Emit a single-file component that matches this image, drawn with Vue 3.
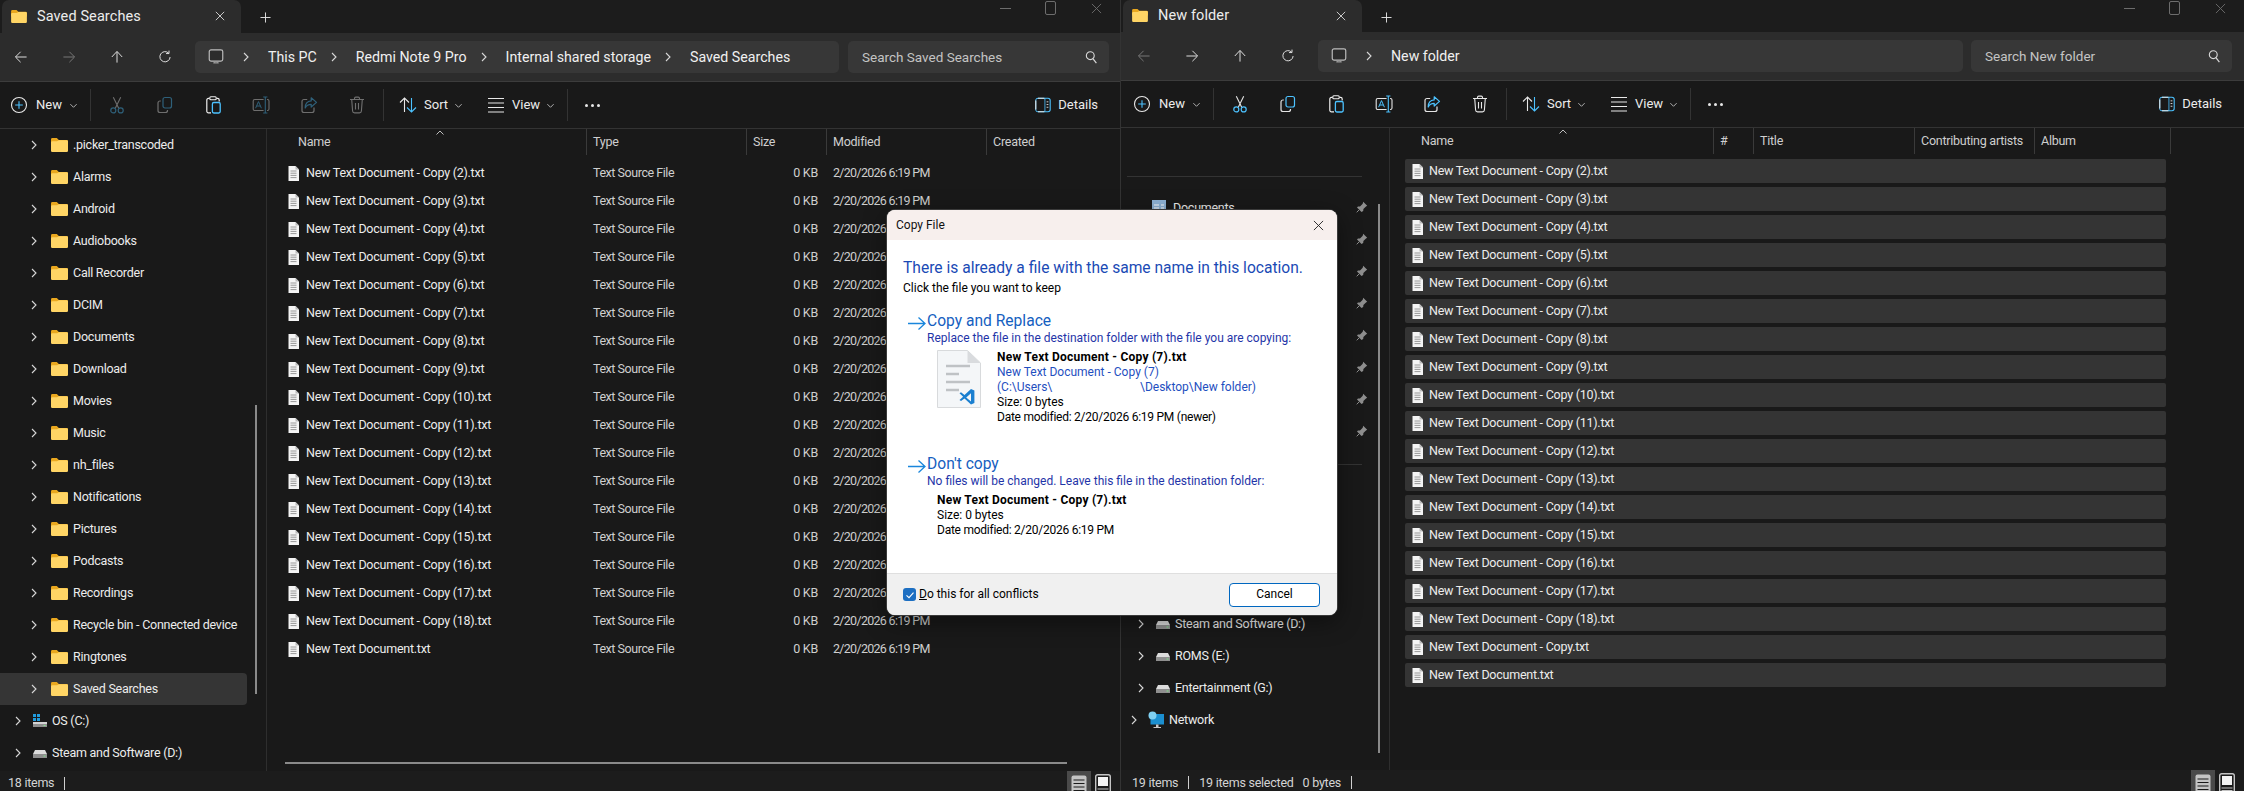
<template>
  <div class="screen">
    <!-- icon sprite -->
    <svg class="sprite" width="0" height="0" aria-hidden="true">
      <symbol id="i-back" viewBox="0 0 20 20"><path d="M17 10H3.5M9.5 3.5 3 10l6.5 6.5" fill="none" stroke="#e4e4e4" stroke-width="1.2"/></symbol>
      <symbol id="i-fwd" viewBox="0 0 20 20"><path d="M3 10h13.5M10.5 3.5 17 10l-6.5 6.5" fill="none" stroke="#e4e4e4" stroke-width="1.2"/></symbol>
      <symbol id="i-up" viewBox="0 0 20 20"><path d="M10 17V3.5M3.5 10 10 3l6.5 7" fill="none" stroke="#e4e4e4" stroke-width="1.2"/></symbol>
      <symbol id="i-refresh" viewBox="0 0 20 20"><path d="M14.6 5.2A6.4 6.4 0 1 0 16.4 10M15 2v3.7h-3.7" fill="none" stroke="#e4e4e4" stroke-width="1.2"/></symbol>
      <symbol id="i-pc" viewBox="0 0 20 20"><rect x="2.5" y="2" width="15" height="12.5" rx="2" fill="#2c2c2c" stroke="#bdbdbd" stroke-width="1.3"/><path d="M7 16.5h6M8.5 14.5v2M11.5 14.5v2" stroke="#9a9a9a" stroke-width="1.2"/></symbol>
      <symbol id="i-chev" viewBox="0 0 10 10"><path d="M3 1l4 4-4 4" fill="none" stroke="#d8d8d8" stroke-width="1.1"/></symbol>
      <symbol id="i-caret" viewBox="0 0 10 10"><path d="M1.5 3.5 5 7l3.5-3.5" fill="none" stroke="#bdbdbd" stroke-width="1"/></symbol>
      <symbol id="i-search" viewBox="0 0 16 16"><circle cx="6.7" cy="6" r="4.2" fill="none" stroke="#d8d8d8" stroke-width="1.2"/><path d="M9.5 9.2 13.2 14" stroke="#d8d8d8" stroke-width="1.3"/></symbol>
      <symbol id="i-x" viewBox="0 0 12 12"><path d="M1 1l10 10M11 1 1 11" fill="none" stroke="currentColor" stroke-width="1"/></symbol>
      <symbol id="i-plus" viewBox="0 0 12 12"><path d="M6 .5v11M.5 6h11" stroke="#e8e8e8" stroke-width="1"/></symbol>
      <symbol id="i-new" viewBox="0 0 20 20"><circle cx="10" cy="10" r="7.5" fill="none" stroke="#e8e8e8" stroke-width="1.1"/><path d="M10 6.2v7.6M6.2 10h7.6" stroke="#4cc2ff" stroke-width="1.1"/></symbol>
      <symbol id="i-cut" viewBox="0 0 20 20"><path d="M6.3 2.2l5.4 11M13.7 2.2l-5.4 11" stroke="#e4e4e4" stroke-width="1.1" fill="none"/><circle cx="6.3" cy="15.4" r="2.5" fill="none" stroke="#4cc2ff" stroke-width="1.2"/><circle cx="13.7" cy="15.4" r="2.5" fill="none" stroke="#4cc2ff" stroke-width="1.2"/></symbol>
      <symbol id="i-copy" viewBox="0 0 20 20"><path d="M5.8 6H5a2 2 0 0 0-2 2v7.5a2 2 0 0 0 2 2h5.5a2 2 0 0 0 2-2V15" fill="none" stroke="#e4e4e4" stroke-width="1.2"/><rect x="8" y="2.5" width="8.5" height="10.5" rx="2" fill="none" stroke="#4cc2ff" stroke-width="1.2"/></symbol>
      <symbol id="i-paste" viewBox="0 0 20 20"><path d="M8 17.8H5.4a1.6 1.6 0 0 1-1.6-1.6V5a1.6 1.6 0 0 1 1.6-1.6h1M13.6 3.4h1a1.6 1.6 0 0 1 1.6 1.6v1.4" fill="none" stroke="#efefef" stroke-width="1.2"/><rect x="6.8" y="1.8" width="6.4" height="3" rx="1" fill="none" stroke="#efefef" stroke-width="1.1"/><rect x="9.4" y="7.5" width="7.8" height="10.5" rx="1.4" fill="none" stroke="#4cc2ff" stroke-width="1.3"/></symbol>
      <symbol id="i-rename" viewBox="0 0 20 20"><path d="M12.6 4.5H3.8a1.6 1.6 0 0 0-1.6 1.6v7.8a1.6 1.6 0 0 0 1.6 1.6h8.8M16 4.5h.4A1.6 1.6 0 0 1 18 6.1v7.8a1.6 1.6 0 0 1-1.6 1.6H16" fill="none" stroke="#e4e4e4" stroke-width="1.1"/><path d="M12.2 2h4.2M14.3 2v16M12.2 18h4.2" fill="none" stroke="#4cc2ff" stroke-width="1.1"/><path d="M4.6 13.2 7.5 6.6l2.9 6.6M5.7 11h3.6" fill="none" stroke="#4cc2ff" stroke-width="1"/></symbol>
      <symbol id="i-share" viewBox="0 0 20 20"><path d="M8.2 4.5H5a2 2 0 0 0-2 2v9a2 2 0 0 0 2 2h8a2 2 0 0 0 2-2v-3" fill="none" stroke="#e4e4e4" stroke-width="1.2"/><path d="M12.2 2.8l5.3 4.6-5.3 4.6V9.4c-3 0-4.8 1.2-6 3.6 0-4.2 2-6.8 6-7.1z" fill="none" stroke="#4cc2ff" stroke-width="1.2" stroke-linejoin="round"/></symbol>
      <symbol id="i-trash" viewBox="0 0 20 20"><path d="M3 4.5h14M7.5 4.5V3.4a1.3 1.3 0 0 1 1.3-1.3h2.4a1.3 1.3 0 0 1 1.3 1.3v1.1M4.7 4.5 5.6 16a2 2 0 0 0 2 1.9h4.8a2 2 0 0 0 2-1.9l.9-11.5M8.5 8v6.5M11.5 8v6.5" fill="none" stroke="#e8e8e8" stroke-width="1.1"/></symbol>
      <symbol id="i-sort" viewBox="0 0 20 20"><path d="M6.5 17V3M2 7.5l4.5-4.5L11 7.5" fill="none" stroke="#e8e8e8" stroke-width="1.1"/><path d="M13.5 3v14M9 12.5l4.5 4.5 4.5-4.5" fill="none" stroke="#4cc2ff" stroke-width="1.1"/></symbol>
      <symbol id="i-view" viewBox="0 0 20 20"><path d="M2 3.5h16M2 8h16M2 12.5h16M2 17h16" stroke="#e8e8e8" stroke-width="1.1"/></symbol>
      <symbol id="i-details" viewBox="0 0 20 20"><rect x="2" y="2.5" width="16" height="15" rx="2.5" fill="none" stroke="#4cc2ff" stroke-width="1.2"/><path d="M12 2.5v15" stroke="#4cc2ff" stroke-width="1.2"/><path d="M14 6.5h2M14 9.5h2M14 12.5h2" stroke="#e8e8e8" stroke-width="1"/><path d="M3 3.5h8.5v13H3z" fill="#191919"/><path d="M4.5 2.5h7M4.5 17.5h7M2 5v10" stroke="#e8e8e8" stroke-width="1.2" fill="none"/></symbol>
      <symbol id="i-folder" viewBox="0 0 17 14"><path d="M1.4 0h4.4l2 2h7.8A1.4 1.4 0 0 1 17 3.4V7H0V1.4A1.4 1.4 0 0 1 1.4 0z" fill="#eaa81f"/><path d="M1.2 3.2H6l1.8-1h7.9A1.3 1.3 0 0 1 17 3.5v9.2a1.3 1.3 0 0 1-1.3 1.3H1.3A1.3 1.3 0 0 1 0 12.7V4.4a1.2 1.2 0 0 1 1.2-1.2z" fill="#ffd565"/></symbol>
      <symbol id="i-doc" viewBox="0 0 11 15"><path d="M.5 0h7L11 3.5V15H.5z" fill="#f4f4f4"/><path d="M7.5 0v3.5H11z" fill="#b9b9b9"/><path d="M2.5 5h6M2.5 7.2h6M2.5 9.4h6M2.5 11.6h6" stroke="#8c8c8c" stroke-width=".9"/></symbol>
      <symbol id="i-os" viewBox="0 0 16 16"><path d="M1 1h3v3H1zM5 1h3v3H5zM1 5h3v3H1zM5 5h3v3H5z" fill="#1f9bde"/><path d="M1 9h14v2H1z" fill="#d4d4d4"/><path d="M1 11h14v3H1z" fill="#8f8f8f"/><path d="M11.5 12h2v1h-2z" fill="#7fe08a"/></symbol>
      <symbol id="i-drive" viewBox="0 0 16 16"><path d="M3 5h10l2 4H1z" fill="#dcdcdc"/><path d="M1 9h14v4H1z" fill="#8f8f8f"/><path d="M11.5 10.5h2v1h-2z" fill="#7fe08a"/></symbol>
      <symbol id="i-net" viewBox="0 0 18 18"><path d="M3.5 3H17v10.5H3.5z" fill="#1b8fd0"/><circle cx="5.5" cy="4.5" r="4" fill="#7fd0f2"/><path d="M9 13.5h2.5v2.5H9z" fill="#c8c8c8"/><path d="M6.5 16h7.5v1H6.5z" fill="#c8c8c8"/></symbol>
      <symbol id="i-pin" viewBox="0 0 12 12"><path d="M7.2.8l4 4-1.2.6-2.6 2.7-.2 2L5.5 11 1 6.5l1-.9 2-.2 2.7-2.6z" fill="#8e8e8e"/><path d="M3 9l-2.3 2.3" stroke="#8e8e8e" stroke-width="1"/></symbol>
      <symbol id="i-arrow" viewBox="0 0 18 14"><path d="M0 7.5h16.5M10.5 1.5l6.5 6-6.5 6" fill="none" stroke="#1a86dc" stroke-width="1.3"/></symbol>
      <symbol id="i-page" viewBox="0 0 44 58"><path d="M.5.5h30L43.5 13v44.5H.5z" fill="#f4f6f8" stroke="#d8dadc"/><path d="M30.5.5v12.5h13z" fill="#d9dbde"/><path d="M9 16h24M9 24h13M9 32h24M9 40h13" stroke="#bfc2c5" stroke-width="2.6"/><path d="M34 44l-6.5 6-3.5-2.7-1.5 1 3.6 3.4-3.6 3.4 1.5 1 3.5-2.7 6.5 6 3.4-1.4V45.4zm0 4.2v8.3l-4.8-4.1z" fill="#1a7fd0" transform="translate(0 -5)"/></symbol>
      <symbol id="i-list" viewBox="0 0 16 20"><rect x=".5" y=".5" width="15" height="19" rx="2" fill="#c4c4c4"/><path d="M2.5 5h11M2.5 8.5h11M2.5 12h11M2.5 15.5h11" stroke="#1a1a1a" stroke-width="1"/></symbol>
      <symbol id="i-tiles" viewBox="0 0 16 20"><rect x=".7" y=".7" width="14.6" height="18.6" rx="2" fill="#1a1a1a" stroke="#c4c4c4" stroke-width="1.4"/><rect x="3" y="3" width="10" height="9" fill="#f4f4f4"/><path d="M2.5 15h11M2.5 17.5h11" stroke="#c4c4c4" stroke-width="1"/></symbol>
    </svg>

    <section v-for="win in windows" :key="win.id" class="win" :class="win.id">
      <div class="tabbar bar">
        <div class="tab">
          <svg class="ic-folder-tab"><use href="#i-folder" /></svg>
          <span class="tab-title">{{ win.title }}</span>
          <svg class="tab-x"><use href="#i-x" /></svg>
        </div>
        <svg class="tab-plus"><use href="#i-plus" /></svg>
        <div class="controls">
          <span class="min"></span>
          <span class="max"></span>
          <svg class="cl"><use href="#i-x" /></svg>
        </div>
      </div>

      <div class="navbar bar">
        <div class="navbtns">
          <svg class="nav-ic" :class="{ dim: win.id === 'right' }"><use href="#i-back" /></svg>
          <svg class="nav-ic" :class="{ dim: win.id === 'left' }"><use href="#i-fwd" /></svg>
          <svg class="nav-ic"><use href="#i-up" /></svg>
          <svg class="nav-ic"><use href="#i-refresh" /></svg>
        </div>
        <div class="address">
          <svg class="pc"><use href="#i-pc" /></svg>
          <template v-for="c in win.crumbs" :key="c">
            <svg class="crumb-chev"><use href="#i-chev" /></svg>
            <span class="crumb">{{ c }}</span>
          </template>
        </div>
        <div class="search">
          <span>{{ win.search }}</span>
          <svg class="search-ic"><use href="#i-search" /></svg>
        </div>
      </div>

      <div class="toolbar bar">
        <div class="drop d-new">
          <svg class="tool-ic"><use href="#i-new" /></svg>
          <span class="drop-label">New</span>
          <svg class="caret"><use href="#i-caret" /></svg>
        </div>
        <i class="tsep"></i>
        <div class="actions" :class="{ disabled: win.id === 'left' }">
          <svg class="tool-ic" v-for="a in actions" :key="a" :class="{ on: a === 'paste' }"><use :href="'#i-' + a" /></svg>
        </div>
        <i class="tsep"></i>
        <div class="drop d-sort">
          <svg class="tool-ic"><use href="#i-sort" /></svg>
          <span class="drop-label">Sort</span>
          <svg class="caret"><use href="#i-caret" /></svg>
        </div>
        <div class="drop d-view">
          <svg class="tool-ic"><use href="#i-view" /></svg>
          <span class="drop-label">View</span>
          <svg class="caret"><use href="#i-caret" /></svg>
        </div>
        <i class="tsep"></i>
        <div class="dots"><b></b><b></b><b></b></div>
        <div class="details">
          <svg class="tool-ic"><use href="#i-details" /></svg>
          <span>Details</span>
        </div>
      </div>

      <div class="body">
        <aside class="side">
          <template v-if="win.id === 'left'">
            <div v-for="f in folders" :key="f" class="node folder" :class="{ selected: f === 'Saved Searches' }">
              <svg class="node-chev"><use href="#i-chev" /></svg>
              <svg class="ic-folder"><use href="#i-folder" /></svg>
              <span>{{ f }}</span>
            </div>
            <div class="node drive" v-for="d in leftDrives" :key="d.name">
              <svg class="node-chev"><use href="#i-chev" /></svg>
              <svg class="ic-drive"><use :href="d.icon" /></svg>
              <span>{{ d.name }}</span>
            </div>
            <div class="side-thumb thumb-left"></div>
          </template>
          <template v-else>
            <div class="side-gap"></div>
            <div class="side-line"></div>
            <div class="side-gap2"></div>
            <div class="node pinned" v-for="(p, i) in 8" :key="p">
              <template v-if="i === 0">
                <svg class="ic-docs" viewBox="0 0 14 16"><rect x="0" y="0" width="14" height="16" fill="#8fb3d6"/><path d="M2 5h5M2 8h5M9 5h3M9 8h3" stroke="#fff" stroke-width="1.2"/></svg>
                <span>Documents</span>
              </template>
              <svg class="ic-pin"><use href="#i-pin" /></svg>
            </div>
            <div class="side-gap3"></div>
            <div class="side-line"></div>
            <div class="side-gap4"></div>
            <div class="node drive" v-for="d in rightDrives" :key="d">
              <svg class="node-chev"><use href="#i-chev" /></svg>
              <svg class="ic-drive"><use href="#i-drive" /></svg>
              <span>{{ d }}</span>
            </div>
            <div class="node netw">
              <svg class="node-chev"><use href="#i-chev" /></svg>
              <svg class="ic-net"><use href="#i-net" /></svg>
              <span>Network</span>
            </div>
            <div class="side-thumb thumb-right"></div>
          </template>
        </aside>

        <div class="list">
          <div class="head cols">
            <div v-for="(h, i) in win.columns" :key="h" class="hcell">
              {{ h }}
              <svg v-if="i === 0" class="sort-up"><use href="#i-caret" /></svg>
            </div>
          </div>
          <div class="rows">
            <div v-for="f in win.files" :key="f" class="row" :class="{ sel: win.id === 'right' }">
              <div class="rowfill cols">
                <div class="name">
                  <svg class="ic-doc"><use href="#i-doc" /></svg>
                  <span>{{ f }}</span>
                </div>
                <template v-if="win.id === 'left'">
                  <div class="type">Text Source File</div>
                  <div class="size">0 KB</div>
                  <div class="date">2/20/2026 6:19 PM</div>
                </template>
              </div>
            </div>
          </div>
          <div v-if="win.id === 'left'" class="hscroll"></div>
        </div>
      </div>

      <div class="status bar">
        <span>{{ win.count }}</span>
        <i class="ssep"></i>
        <template v-if="win.selected">
          <span>{{ win.selected }}</span>
          <span class="bytes">0 bytes</span>
          <i class="ssep"></i>
        </template>
        <div class="viewsw">
          <div class="sw on"><svg><use href="#i-list" /></svg></div>
          <svg class="sw2"><use href="#i-tiles" /></svg>
        </div>
      </div>
    </section>

    <!-- Copy File dialog -->
    <div class="dialog">
      <div class="dlg-title">
        <span>Copy File</span>
        <svg class="dlg-x"><use href="#i-x" /></svg>
      </div>
      <div class="dlg-body">
        <div class="dlg-head">There is already a file with the same name in this location.</div>
        <div class="dlg-sub">Click the file you want to keep</div>

        <div class="opt first">
          <svg class="opt-arrow"><use href="#i-arrow" /></svg>
          <span>Copy and Replace</span>
        </div>
        <div class="opt-sub">Replace the file in the destination folder with the file you are copying:</div>
        <div class="opt-file">
          <svg class="page"><use href="#i-page" /></svg>
          <div class="lines">
            <div class="bold">New Text Document - Copy (7).txt</div>
            <div class="link">New Text Document - Copy (7)</div>
            <div class="link"><span class="redact">(C:\Users\</span>\Desktop\New folder)</div>
            <div>Size: 0 bytes</div>
            <div class="when">Date modified: 2/20/2026 6:19 PM (newer)</div>
          </div>
        </div>

        <div class="opt second">
          <svg class="opt-arrow"><use href="#i-arrow" /></svg>
          <span>Don't copy</span>
        </div>
        <div class="opt-sub">No files will be changed. Leave this file in the destination folder:</div>
        <div class="lines keep">
          <div class="bold">New Text Document - Copy (7).txt</div>
          <div>Size: 0 bytes</div>
          <div class="when">Date modified: 2/20/2026 6:19 PM</div>
        </div>
      </div>
      <div class="dlg-foot">
        <label class="check">
          <span class="box"><svg viewBox="0 0 12 12" width="12" height="12"><path d="M2.5 6.3 5 8.6l4.5-5" fill="none" stroke="#fff" stroke-width="1.1"/></svg></span>
          <span><u>D</u>o this for all conflicts</span>
        </label>
        <button class="cancel">Cancel</button>
      </div>
    </div>
  </div>
</template>

<script setup>
const copies = (from, to) => {
  const out = []
  for (let i = from; i <= to; i++) out.push(`New Text Document - Copy (${i}).txt`)
  return out
}

const actions = ['cut', 'copy', 'paste', 'rename', 'share', 'trash']

const folders = [
  '.picker_transcoded', 'Alarms', 'Android', 'Audiobooks', 'Call Recorder', 'DCIM',
  'Documents', 'Download', 'Movies', 'Music', 'nh_files', 'Notifications', 'Pictures',
  'Podcasts', 'Recordings', 'Recycle bin - Connected device', 'Ringtones', 'Saved Searches'
]
const leftDrives = [
  { name: 'OS (C:)', icon: '#i-os' },
  { name: 'Steam and Software (D:)', icon: '#i-drive' }
]
const rightDrives = ['Steam and Software (D:)', 'ROMS (E:)', 'Entertainment (G:)']

const windows = [
  {
    id: 'left',
    title: 'Saved Searches',
    crumbs: ['This PC', 'Redmi Note 9 Pro', 'Internal shared storage', 'Saved Searches'],
    search: 'Search Saved Searches',
    columns: ['Name', 'Type', 'Size', 'Modified', 'Created'],
    files: [...copies(2, 18), 'New Text Document.txt'],
    count: '18 items',
    selected: ''
  },
  {
    id: 'right',
    title: 'New folder',
    crumbs: ['New folder'],
    search: 'Search New folder',
    columns: ['Name', '#', 'Title', 'Contributing artists', 'Album'],
    files: [...copies(2, 18), 'New Text Document - Copy.txt', 'New Text Document.txt'],
    count: '19 items',
    selected: '19 items selected'
  }
]
</script>

<style>
html, body { margin: 0; background: #191919; overflow: hidden; }
</style>

<style scoped>
.screen {
  display: flex;
  position: relative;
  width: 2244px;
  height: 791px;
  overflow: hidden;
  background: #191919;
  color: #ececec;
  font: 12.5px/16px Roboto, "Noto Sans", sans-serif;
  letter-spacing: -.25px;
}
.sprite { position: absolute; }
svg { display: block; flex: none; }

.win { display: flex; flex-direction: column; height: 791px; flex: none; }
.win.left { width: 1120px; border-right: 1px solid #333; }
.win.right { width: 1123px; }
.right .bar { padding-left: 2px; }
.bar { display: flex; box-sizing: border-box; flex: none; }

/* tabs */
.tabbar { height: 33px; background: #1c1c1c; align-items: flex-start; padding-left: 2px; }
.right .tabbar { height: 32px; }
.tab {
  display: flex; align-items: center; width: 239px; height: 33px; padding: 0 0 0 9px; box-sizing: border-box;
  background: #2c2c2c; border-radius: 7px 7px 0 0; position: relative;
}
.right .tab { height: 32px; }
.ic-folder-tab { width: 16px; height: 13px; margin-top: -1px; }
.tab-title { margin-left: 10px; font-size: 14.5px; letter-spacing: .1px; }
.tab-x { width: 10px; height: 10px; margin-left: auto; margin-right: 16px; margin-top: -1px; color: #e8e8e8; }
.tab-plus { width: 11px; height: 11px; margin: 12px 0 0 19px; }
.controls { display: flex; align-items: center; margin-left: auto; height: 16px; color: #6d6d6d; }
.min { width: 11px; height: 1px; background: #6d6d6d; }
.max { width: 9px; height: 12px; border: 1px solid #6d6d6d; border-radius: 2px; margin-left: 34px; }
.cl { width: 11px; height: 11px; margin: 0 18px 0 35px; color: #6d6d6d; }

/* nav row */
.navbar { height: 49px; background: #2c2c2c; border-bottom: 1px solid #3c3c3c; align-items: flex-start; padding-top: 8px; }
.navbtns { display: flex; margin-left: -3px; width: 192px; }
.nav-ic { width: 48px; height: 16px; margin-top: 8px; }
.nav-ic.dim { opacity: .42; }
.address {
  display: flex; align-items: center; box-sizing: border-box; width: 644px; height: 32px; margin-left: 6px; padding-left: 12px;
  background: #373737; border-radius: 5px; color: #f0f0f0; font-size: 14.2px; letter-spacing: 0;
}
.right .address { width: 645px; }
.pc { width: 18px; height: 18px; margin-right: 4px; }
.crumb-chev { width: 10px; height: 10px; margin: 0 17px 0 12px; }
.crumb { white-space: nowrap; }
.search {
  display: flex; align-items: center; box-sizing: border-box; width: 261px; height: 32px; margin-left: 9px; padding: 0 10px 0 14px;
  background: #373737; border-radius: 5px; color: #c4c4c4; font-size: 13.5px; letter-spacing: 0;
}
.right .search { margin-left: 8px; }
.search-ic { width: 15px; height: 15px; margin-left: auto; }

/* command bar */
.toolbar { height: 47px; background: #191919; border-bottom: 1px solid #333; align-items: center; letter-spacing: 0; font-size: 13px; }
.tool-ic { width: 20px; height: 20px; }
.drop { display: flex; align-items: center; box-sizing: border-box; }
.drop-label { margin-left: 7px; }
.caret { width: 9px; height: 9px; margin-left: 7px; }
.d-new { width: 90px; padding-left: 9px; }
.d-sort { width: 88px; padding-left: 14px; }
.d-sort .drop-label, .d-view .drop-label { margin-left: 6px; }
.d-sort .caret { margin-left: 6px; }
.d-view { width: 95px; padding-left: 14px; }
.d-view .caret { margin-left: 6px; }
.tsep { display: block; width: 1px; height: 32px; background: #333; flex: none; }
.actions { display: flex; margin-left: 2px; width: 290px; }
.actions .tool-ic { width: 20px; margin: 0 14px; }
.actions.disabled .tool-ic { opacity: .42; }
.actions.disabled .tool-ic.on { opacity: 1; }
.dots { display: flex; gap: 3px; margin-left: 17px; }
.dots b { width: 3px; height: 3px; border-radius: 50%; background: #e8e8e8; }
.details { display: flex; align-items: center; gap: 6px; margin-left: auto; margin-right: 22px; }
.details .tool-ic { width: 18px; height: 18px; }

/* main area */
.body { display: flex; flex: 1; min-height: 0; }
.right .body { padding-left: 2px; }
.side { position: relative; width: 266px; flex: none; border-right: 1px solid #2e2e2e; overflow: hidden; box-sizing: content-box; }
.node { display: flex; align-items: center; height: 32px; white-space: nowrap; }
.node-chev { width: 10px; height: 10px; margin-left: 29px; }
.ic-folder { width: 17px; height: 14px; margin-left: 12px; }
.folder span { margin-left: 5px; }
.selected { width: 247px; background: #353535; border-radius: 0 4px 4px 0; }
.drive .node-chev { margin-left: 13px; }
.ic-drive { width: 16px; height: 16px; margin-left: 9px; }
.drive span { margin-left: 4px; }
.right .drive .node-chev { margin-left: 13px; }
.right .drive .ic-drive { margin-left: 9px; }
.netw .node-chev { margin-left: 6px; }
.ic-net { width: 18px; height: 18px; margin-left: 8px; }
.netw span { margin-left: 4px; }
.side-thumb { position: absolute; width: 2px; background: #8a8a8a; }
.thumb-left { left: 255px; top: 276px; height: 289px; }
.thumb-right { left: 255px; top: 76px; height: 549px; }
.side-gap { height: 48px; }
.side-line { height: 1px; background: #333; width: 235px; margin-left: 4px; }
.side-gap2 { height: 15px; }
.pinned { position: relative; }
.ic-docs { width: 14px; height: 16px; margin-left: 29px; }
.pinned span { margin-left: 7px; }
.ic-pin { position: absolute; left: 233px; top: 9px; width: 12px; height: 12px; }
.side-gap3 { height: 16px; }
.side-gap4 { height: 143px; }

.list { position: relative; flex: 1; min-width: 0; }
.left .cols { display: grid; grid-template-columns: 320px 160px 80px 160px 1fr; }
.right .cols { display: grid; grid-template-columns: 324px 40px 161px 120px 136px; }
.head { height: 26px; }
.hcell { position: relative; display: flex; align-items: center; box-sizing: border-box; padding-left: 6px; border-right: 1px solid #3a3a3a; color: #cfcfcf; white-space: nowrap; }
.hcell:first-child { padding-left: 31px; }
.hcell:last-child { border-right: none; }
.right .hcell:last-child { border-right: 1px solid #3a3a3a; }
.sort-up { position: absolute; left: 168px; top: -1px; width: 10px; height: 10px; transform: rotate(180deg); }
.rows { padding-top: 4px; }
.row { height: 28px; box-sizing: border-box; }
.rowfill { height: 28px; align-items: center; }
.name { display: flex; align-items: center; padding-left: 21px; white-space: nowrap; }
.ic-doc { width: 11px; height: 15px; margin-right: 7px; }
.type { padding-left: 6px; color: #cfcfcf; white-space: nowrap; letter-spacing: -.45px; }
.size { text-align: right; padding-right: 9px; color: #cfcfcf; }
.date { padding-left: 6px; color: #cfcfcf; white-space: nowrap; letter-spacing: -.7px; }
.row.sel { padding: 1px 0 3px 15px; }
.row.sel .rowfill { display: block; width: 761px; height: 24px; background: #343434; border-radius: 2px; }
.row.sel .name { height: 24px; padding-left: 7px; }
.row.sel .ic-doc { margin-right: 6px; }
.hscroll { position: absolute; left: 18px; width: 782px; height: 2px; bottom: 7px; background: #8a8a8a; }

/* status bar */
.status { position: relative; height: 20px; background: #1c1c1c; align-items: center; padding-left: 8px; padding-top: 4px; color: #d4d4d4; }
.right .status { height: 21px; padding-left: 11px; }
.ssep { display: block; width: 1px; height: 13px; background: #cfcfcf; margin: 0 10px; flex: none; }
.bytes { margin-left: 9px; }
.viewsw { display: flex; margin-left: auto; margin-right: 9px; align-self: flex-start; margin-top: -4px; }
.sw { width: 24px; height: 21px; background: #4a4a4a; display: flex; justify-content: center; padding-top: 4px; box-sizing: border-box; overflow: hidden; flex: none; }
.sw svg { width: 16px; height: 20px; }
.sw2 { width: 16px; height: 20px; margin: 3px 0 0 4px; }

/* dialog */
.dialog {
  position: absolute; left: 887px; top: 210px; display: flex; flex-direction: column; width: 450px; height: 405px;
  background: #fff; border-radius: 8px; overflow: hidden; color: #000; font-size: 12px; line-height: 15px; letter-spacing: 0;
  box-shadow: 0 0 0 1px #3a3a3a, 0 6px 24px rgba(0, 0, 0, .45);
}
.dlg-title { display: flex; align-items: center; flex: none; height: 30px; padding: 0 9px; background: #f7efed; font-size: 12px; color: #111; }
.dlg-x { width: 11px; height: 11px; margin-left: auto; margin-right: 4px; color: #222; }
.dlg-body { flex: 1; padding: 17px 0 0 16px; }
.dlg-head { font-size: 15.6px; line-height: 22px; color: #1a4ab5; }
.dlg-sub { line-height: 16px; margin-top: 1px; }
.opt { display: flex; align-items: center; font-size: 15.6px; line-height: 22px; color: #1560c0; position: relative; }
.opt.first { margin-top: 14px; }
.opt.second { margin-top: 28px; }
.opt-arrow { width: 18px; height: 14px; margin: 4px 1px 0 5px; }
.opt-sub { margin: -2px 0 0 24px; line-height: 16px; color: #1f35a8; }
.opt-file { display: flex; margin: 4px 0 0 34px; }
.page { width: 44px; height: 58px; }
.lines { margin-left: 16px; }
.bold { font-weight: 700; letter-spacing: .23px; }
.when { letter-spacing: -.25px; }
.link { color: #1f4fc0; }
.redact { display: inline-block; width: 143px; }
.lines.keep { margin: 4px 0 0 34px; }
.dlg-foot { display: flex; align-items: center; justify-content: space-between; flex: none; height: 42px; box-sizing: border-box; padding: 0 17px 0 16px; background: #f0f0f0; border-top: 1px solid #dfdfdf; }
.check { display: flex; align-items: center; gap: 3px; }
.box { display: flex; width: 13px; height: 13px; background: #1d6fc2; border-radius: 3px; align-items: center; justify-content: center; }
.cancel { width: 91px; height: 24px; padding: 0; background: #fff; border: 1px solid #0067c0; border-radius: 4px; font: inherit; color: #000; }
</style>
